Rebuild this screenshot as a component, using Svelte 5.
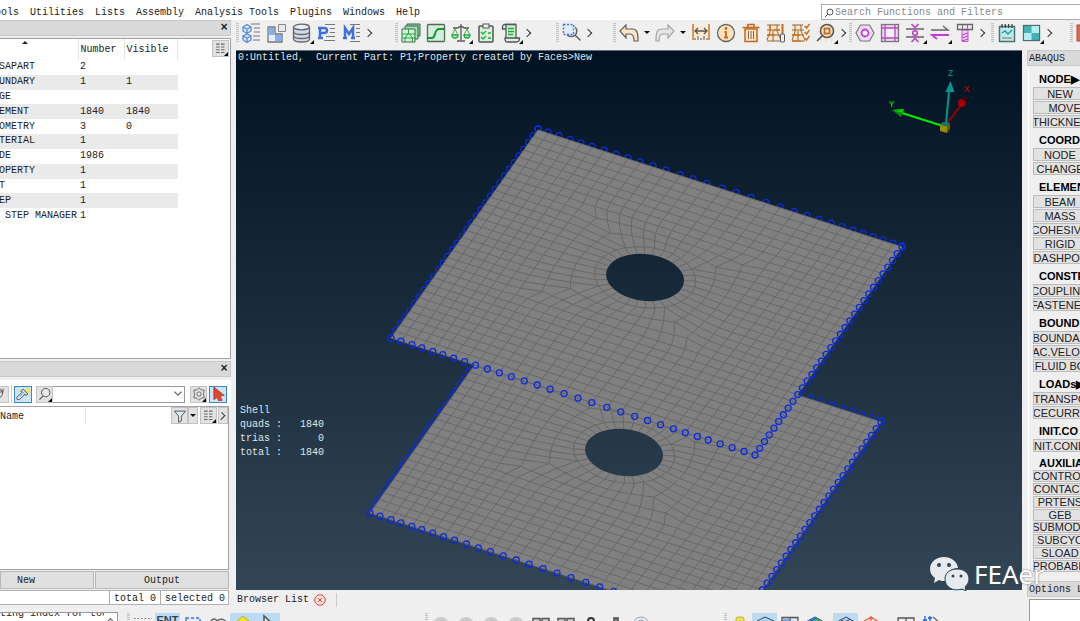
<script lang="ts">
  type Tool = { icon: string; label: string; corner?: boolean; small?: boolean; on?: boolean };

  const menus = ['ools', 'Utilities', 'Lists', 'Assembly', 'Analysis Tools', 'Plugins', 'Windows', 'Help'];

  const icons: Record<string, string> = {
    model: '<path d="M1 4l4-2.500 4 2.500v4l-4 2.500-4-2.500zM1 4l4 2 4-2M5 6v4.500M1 13v4l4 2.500 4-2.500v-4l-4-2-4 2 4 2 4-2M5 15v4.500" fill="#dbe8ff" stroke="#5b8ad8" stroke-width="1.300"/><path d="M9 1h9M12 5h6M12 9h6M11 13h7M11 17h7" stroke="#777"/>',
    part: '<path d="M1 4h7v7h7v8H1z" fill="#e3ecf8" stroke="#777" stroke-width="1.300"/><path d="M2 5h5v7H2zM8 12h6v6H8z" fill="#7fb0f5"/><path d="M11.500 1.500h7v7h-7z" fill="#e6e9ee" stroke="#888"/>',
    database: '<path d="M1.500 4v12c0 4 16 4 16 0V4" fill="#cfd9ea" stroke="#666" stroke-width="1.300"/><ellipse cx="9.500" cy="4" rx="8" ry="2.800" fill="#e8eef7" stroke="#666" stroke-width="1.300"/><path d="M1.500 8.500c0 4 16 4 16 0M1.500 12.500c0 4 16 4 16 0" fill="none" stroke="#666" stroke-width="1.300"/>',
    property: '<path d="M3 16V5h4c4 0 4 5 0 5H4M1 15h5M1 5h3" fill="none" stroke="#3f6fdc" stroke-width="2.500"/><path d="M8 1.500h10M13 5.500h5M13 9.500h5M9 13.500h9M7 17.500h11" stroke="#777"/>',
    material: '<path d="M3 16V5l4 6 4-6v11M1 15h4M9 15h4" fill="none" stroke="#3f6fdc" stroke-width="2.500"/><path d="M8 1.500h10M14 5.500h4M14 9.500h4M14 13.500h4M8 18.500h10" stroke="#777"/>',
    layers: '<path d="M6 1h13v12H6z" fill="#8cc9a0" stroke="#3d6b4c"/><path d="M4 3h13v13H4z" fill="#a9dcb5" stroke="#3d6b4c"/><path d="M1 6h13v13H1z" fill="#d7f3dc" stroke="#3d6b4c"/><path d="M7.500 6v4L4 15v4M7.500 10l4 5v4M1 11h13M1 15h13" fill="none" stroke="#23a33f"/>',
    curve: '<rect x="1.500" y="1.500" width="17" height="17" rx="1" fill="#d3eeda" stroke="#4d6c56" stroke-width="1.300"/><path d="M2 15h4c4 0 2-9 7-9h5" fill="none" stroke="#139a35" stroke-width="2"/>',
    scales: '<path d="M10 1v16M6 18h8M2 5h5c1-2 5-2 6 0h5" fill="none" stroke="#555" stroke-width="1.300"/><path d="M4 6l-3 6M4 6l3 6M16 6l-3 6M16 6l3 6" stroke="#44a95c"/><path d="M1 12a3 3 0 006 0zM13 12a3 3 0 006 0z" fill="#c9f2d0" stroke="#1fae3e" stroke-width="1.300"/>',
    checklist: '<rect x="3" y="3" width="14" height="16" rx="1" fill="#d8f0dc" stroke="#555" stroke-width="1.500"/><rect x="7" y="1" width="6" height="4" fill="#eee" stroke="#555"/><path d="M5 9l2 2 3-3M5 14l2 2 3-3M12 10h3M12 15h3" fill="none" stroke="#1fae3e" stroke-width="1.300"/>',
    script: '<path d="M5 6H1.500V4c0-3 3-2.500 3-2.500H15" fill="#d8f0dc" stroke="#555" stroke-width="1.300"/><path d="M5 15V4c0-2-1-2.500-1-2.500h11V15" fill="#cdeed3" stroke="#555" stroke-width="1.300"/><path d="M4 15h14.500c0 3-1 4-3 4H6c-2 0-2-2-2-4z" fill="#d8f0dc" stroke="#555" stroke-width="1.300"/><path d="M7 5.500h6M7 8.500h6M7 11.500h5" stroke="#1fae3e" stroke-width="1.300"/>',
    zoomArea: '<path d="M1.500 1.500h10v10h-10z" fill="#e3ecfb" stroke="#3477ef" stroke-dasharray="2 1.500" stroke-width="1.400"/><path d="M13 4a5.500 5.500 0 11-8 7.500M13.500 12.500l5 5" fill="none" stroke="#666" stroke-width="1.500"/>',
    undo: '<path d="M7 2v4h6c5 0 6 3 6 12h-4c0-5-1-7-4-7H7v4L1 8z" fill="#fbe6c6" stroke="#655f57" stroke-width="1.200"/>',
    redo: '<path d="M13 2v4H7c-5 0-6 3-6 12h3c0-5 1-7 4-7h5v4l6-7z" fill="#e5e5e5" stroke="#a5a5a5" stroke-width="1.200"/>',
    measure: '<path d="M2 3h16v12H2z" fill="#fbead2"/><path d="M2 1v16M18 1v16" stroke="#cf7a2b" stroke-width="1.500"/><path d="M4 8h12M7 5L4 8l3 3M13 5l3 3-3 3" fill="none" stroke="#555" stroke-width="1.300"/><path d="M4 17v-2M7 17v-4M10 17v-2M13 17v-4M16 17v-2" stroke="#555"/>',
    info: '<circle cx="10" cy="10" r="8.500" fill="#fbe2bd" stroke="#66615a" stroke-width="1.300"/><circle cx="10" cy="5.500" r="1.400" fill="#c8681c"/><path d="M8.500 9H10v5.500M8 14.500h4" fill="none" stroke="#c8681c" stroke-width="1.800"/>',
    trash: '<path d="M4 6h12v12.500H4z" fill="#fbe6c6" stroke="#c8681c" stroke-width="1.500"/><path d="M1.500 4.500h17M7 4V1.500h6V4" fill="none" stroke="#c8681c" stroke-width="1.600"/><path d="M7.500 8v8M10 8v8M12.500 8v8" stroke="#77655a"/>',
    meshEdit: '<path d="M1 2h13v16H1z" fill="#fbe6c6"/><path d="M1 2h13M1 7h13M1 12h13M1 18h13M4 2v7l-3 8M11 2v6l4 9M7 8v10" fill="none" stroke="#8a6847"/><path d="M1 12h8M8 7h6M4 2v6" stroke="#d17622" stroke-width="1.500"/><path d="M16.500 1v10" stroke="#c8681c" stroke-width="2"/><rect x="14.500" y="11" width="4" height="8" rx="1" fill="#eee" stroke="#555"/>',
    meshCheck: '<path d="M1 2h11v16H1z" fill="#fbe6c6"/><path d="M1 2h11M1 7h12M1 12h12M1 18h13M4 2v7l-3 8M10 2v6l4 9M7 8v10" fill="none" stroke="#8a6847"/><path d="M1 12h8M1 18h9" stroke="#d17622" stroke-width="1.500"/><path d="M13.500 3l2 2 3-4M13.500 9l2 2 3-4M13.500 15l2 2 3-4" fill="none" stroke="#d06a1c" stroke-width="1.500"/>',
    find: '<path d="M10 0v19M1 9h18M1 5h18M5 1v18M15 1v18" stroke="#f3d8b4"/><circle cx="11" cy="8" r="6.500" fill="#fbe0ba" stroke="#555" stroke-width="1.500"/><rect x="8.500" y="5.500" width="5" height="5" fill="#fff1dc" stroke="#c8681c" stroke-width="1.800"/><path d="M6 13l-5 5" stroke="#555" stroke-width="1.700"/>',
    hexagon: '<path d="M5.500 2h9l4.500 8-4.500 8h-9L1 10z" fill="#f2dcf5" stroke="#777" stroke-width="1.200"/><circle cx="10" cy="10" r="3.500" fill="#fff" stroke="#c63bd6" stroke-width="1.800"/>',
    frame: '<rect x="1.500" y="1.500" width="17" height="17" fill="#f0d4f4" stroke="#777" stroke-width="1.300"/><rect x="5" y="5" width="10" height="10" fill="#f3eef4"/><path d="M5 2v16M15 2v16M2 5h16M2 15h16" stroke="#b34cc0" stroke-width="1.300"/>',
    joint: '<path d="M1 6h18M1 14h18" stroke="#666" stroke-width="1.500"/><circle cx="10" cy="10" r="2.300" fill="#fff" stroke="#c63bd6" stroke-width="1.600"/><path d="M6.500 1L10 4.500 13.500 1M6.500 19l3.500-3.500 3.500 3.500" fill="none" stroke="#c63bd6" stroke-width="1.600"/>',
    swap: '<path d="M1 7h17l-5-4" fill="none" stroke="#666" stroke-width="1.500"/><path d="M19 12H2l5 4" fill="none" stroke="#c63bd6" stroke-width="1.800"/>',
    bolt: '<path d="M7 7h6v11.500H7z" fill="#f0d4f4" stroke="#b661c0"/><path d="M2.500 1.500h15v5h-15z" fill="#f2e4f4" stroke="#666" stroke-width="1.300"/><path d="M7.500 2v4M12.500 2v4" stroke="#777"/><path d="M7 12l6-2M7 15l6-2M7 18l6-2" stroke="#c63bd6" stroke-width="1.300"/>',
    report: '<rect x="2.500" y="3.500" width="15" height="15" fill="#c3eaea" stroke="#4d7272" stroke-width="1.500"/><path d="M5 1v4M8.300 1v4M11.600 1v4M15 1v4" stroke="#444" stroke-width="1.300"/><path d="M5 10l3-2 3 3 4-4" fill="none" stroke="#14a0a0" stroke-width="1.500"/><path d="M5 15h10" stroke="#777"/>',
    checker: '<rect x="1.500" y="2.500" width="16" height="15" fill="#3fb4b8" stroke="#567" stroke-width="1.300"/><path d="M9.500 3H17v7H9.500zM2 10h7.500v7H2z" fill="#b6ecec"/>',
    red: '<rect x="1" y="2" width="16" height="16" fill="#e2654b" stroke="#b54a33"/>',
    columns: '<path d="M3 3h5M3 7h5M3 11h5M3 15h5M10 3h5M10 7h5M10 11h5M10 15h5" stroke="#666" stroke-width="1.500"/>',
    refresh: '<path d="M1 4c6-4 12 1 11 6s-6 7-11 4M13 2v5H8" fill="none" stroke="#666" stroke-width="1.500"/>',
    torch: '<path d="M13 1c5-1 7 4 6 9l-5-5z" fill="#ffe52e"/><path d="M2 18l-1-3 7-7-1-2 3-3 7 7-3 2-2-1-7 7z" fill="#d9e4ee" stroke="#4a5a68" stroke-width="1.400"/><path d="M8 6l6 6M6 13l3-3" stroke="#4a5a68"/>',
    search: '<circle cx="11" cy="8" r="6" fill="#e9e9e9" stroke="#555" stroke-width="1.400"/><path d="M7 13l-5 5" stroke="#555" stroke-width="1.600"/>',
    gear: '<path d="M10 1l3 3 4.500 0.500-1 5.500 1 5.500-4.500 0.500-3 3-3-3-4.500-0.500 1-5.500-1-5.500 4.500-0.500z" fill="#ddd" stroke="#666" stroke-width="1.300"/><circle cx="10" cy="10" r="3" fill="#eee" stroke="#666" stroke-width="1.300"/>',
    pointer: '<path d="M4 0l15 12-6 1 3 6-5 1-2-5-5 3z" fill="#e2452e" stroke="#a23222"/>',
    funnel: '<path d="M2 3h16l-6 7v7l-4 2v-9z" fill="#dceafa" stroke="#555" stroke-width="1.400"/>',
    dots: '<path d="M1 5.500h18M1 9.500h18" stroke="#777" stroke-dasharray="1.500 2"/>',
    marquee: '<path d="M3 5h14v10H3z" fill="#e3ecfb" stroke="#3477ef" stroke-width="1.500" stroke-dasharray="3 2"/>',
    lasso: '<path d="M4 12c-3-4 2-9 5-4 3-3 7-2 9 1" fill="none" stroke="#666" stroke-width="1.500"/>',
    bulb: '<path d="M4 8l6-5 6 5-6 4z" fill="#f6e02a" stroke="#c1ac20"/>',
    cursor: '<path d="M6 3v12l4-4h5z" fill="#cfe6f7" stroke="#555" stroke-width="1.500"/>',
    disc: '<circle cx="10" cy="12" r="8" fill="#cbcbcb"/><path d="M10 7v4" stroke="#aaa"/>',
    pair: '<path d="M2 5.500h7v9H2zM11 5.500h7v9h-7z" fill="#ccc" stroke="#555" stroke-width="1.500"/>',
    lock: '<path d="M7 12V8c0-4 6-4 6 0v4" fill="none" stroke="#333" stroke-width="2"/>',
    pin: '<path d="M8 5h4v10H8z" fill="#888" stroke="#444" stroke-width="1.500"/>',
    rings: '<circle cx="10" cy="12" r="8" fill="#eee" stroke="#9aa4ad"/><circle cx="10" cy="12" r="5" fill="none" stroke="#9aa4ad"/>',
    cylinder: '<rect x="6" y="4" width="8" height="14" rx="2" fill="#f0df65" stroke="#c4b130"/>',
    cube: '<path d="M2 8l8-4 9 4v9H2zM2 8l8 4 9-4" fill="#a9d4f3" stroke="#445"/>',
    panes: '<path d="M2 4.500h16v13H2zM10 4.500v13M10 10h8" fill="#dde5f2" stroke="#555" stroke-width="1.300"/><path d="M3 6h6v9H3z" fill="#7aa6ef"/>',
    contour: '<path d="M1 9l9-5 9 5-9 6z" fill="#35b668" stroke="#445"/><path d="M1 9l9-5 2 1-9 6z" fill="#2b70df"/><path d="M13 11l6-2-9 6z" fill="#eedc3b"/>',
    meshCube: '<path d="M1 9l9-5 9 5-9 6zM5 7l9 5M14 6l-9 6" fill="#a9cde8" stroke="#445"/>',
    redCube: '<path d="M2 9l8-5 8 5-8 5zM10 3v11" fill="#fbe5e0" stroke="#e2654b" stroke-width="1.300"/>',
    grid: '<path d="M2 5h16v13H2zM10 5v13M2 11h16" fill="#eee" stroke="#555" stroke-width="1.300"/>',
    sliders: '<path d="M4 3v12M9 3v12" stroke="#3477ef" stroke-width="1.500"/><path d="M2 7h4M7 5h4" stroke="#3477ef" stroke-width="2"/><path d="M12 4l6 5-5 5" fill="none" stroke="#666" stroke-width="1.300"/>'
  };

  const toolGroups: { tools: Tool[]; more: boolean }[] = [
    {
      more: true,
      tools: [
        { icon: 'model', label: 'Model' },
        { icon: 'part', label: 'Part' },
        { icon: 'database', label: 'Database', corner: true },
        { icon: 'property', label: 'Property' },
        { icon: 'material', label: 'Material' }
      ]
    },
    {
      more: true,
      tools: [
        { icon: 'layers', label: 'Layers' },
        { icon: 'curve', label: 'Curve' },
        { icon: 'scales', label: 'Compare', corner: true },
        { icon: 'checklist', label: 'Checklist' },
        { icon: 'script', label: 'Script', corner: true }
      ]
    },
    { more: true, tools: [{ icon: 'zoomArea', label: 'Zoom area' }] },
    {
      more: true,
      tools: [
        { icon: 'undo', label: 'Undo' },
        { icon: 'caret', label: 'Undo history', small: true },
        { icon: 'redo', label: 'Redo' },
        { icon: 'caret', label: 'Redo history', small: true },
        { icon: 'measure', label: 'Measure' },
        { icon: 'info', label: 'Card info' },
        { icon: 'trash', label: 'Delete' },
        { icon: 'meshEdit', label: 'Edit mesh' },
        { icon: 'meshCheck', label: 'Check mesh' },
        { icon: 'find', label: 'Find', corner: true }
      ]
    },
    {
      more: true,
      tools: [
        { icon: 'hexagon', label: 'Node' },
        { icon: 'frame', label: 'Frame' },
        { icon: 'joint', label: 'Joint', corner: true },
        { icon: 'swap', label: 'Swap', corner: true },
        { icon: 'bolt', label: 'Bolt' }
      ]
    },
    {
      more: true,
      tools: [
        { icon: 'report', label: 'Report' },
        { icon: 'checker', label: 'Matrix', corner: true }
      ]
    },
    { more: false, tools: [{ icon: 'red', label: 'Optimize' }] }
  ];

  const lowerGroups: Tool[][] = [
    [
      { icon: 'dots', label: 'Points' },
      { icon: 'entity', label: 'Entity', on: true },
      { icon: 'marquee', label: 'Window select' },
      { icon: 'lasso', label: 'Lasso' },
      { icon: 'bulb', label: 'Highlight', on: true },
      { icon: 'cursor', label: 'Cursor', on: true }
    ],
    [
      { icon: 'disc', label: 'Previous' },
      { icon: 'disc', label: 'Reverse' },
      { icon: 'disc', label: 'Stop' },
      { icon: 'disc', label: 'Next' },
      { icon: 'pair', label: 'Mask' },
      { icon: 'pair', label: 'Unmask' },
      { icon: 'lock', label: 'Lock' },
      { icon: 'pin', label: 'Pin' },
      { icon: 'rings', label: 'Sphere clip' }
    ],
    [
      { icon: 'cylinder', label: 'Geometry' },
      { icon: 'cube', label: 'Shaded', on: true },
      { icon: 'panes', label: 'Panes' },
      { icon: 'contour', label: 'Contour' }
    ],
    [
      { icon: 'meshCube', label: 'Mesh lines', on: true },
      { icon: 'redCube', label: 'Transparency' }
    ],
    [
      { icon: 'grid', label: 'Grid' },
      { icon: 'sliders', label: 'Visual options' }
    ]
  ];

  const entities = [
    { name: 'SAPART', number: '2', visible: '' },
    { name: 'UNDARY', number: '1', visible: '1' },
    { name: 'GE', number: '', visible: '' },
    { name: 'EMENT', number: '1840', visible: '1840' },
    { name: 'OMETRY', number: '3', visible: '0' },
    { name: 'TERIAL', number: '1', visible: '' },
    { name: 'DE', number: '1986', visible: '' },
    { name: 'OPERTY', number: '1', visible: '' },
    { name: 'T', number: '1', visible: '' },
    { name: 'EP', number: '1', visible: '' },
    { name: ' STEP MANAGER', number: '1', visible: '' }
  ];

  const sections = [
    { title: 'NODE▶', items: ['NEW', '\u00a0\u00a0\u00a0MOVE', 'THICKNES'] },
    { title: 'COORD', items: ['NODE', 'CHANGE'] },
    { title: 'ELEMENT', items: ['BEAM', 'MASS', 'COHESIVE', 'RIGID', 'DASHPOT'] },
    { title: 'CONSTR', items: ['COUPLING', 'FASTENER'] },
    { title: 'BOUND', items: ['BOUNDAR', 'AC.VELOC', 'FLUID BO'] },
    { title: 'LOADs▶', items: ['TRANSPO', 'CECURRE'] },
    { title: 'INIT.CO', items: ['NIT.COND'] },
    {
      title: 'AUXILIA',
      dense: true,
      items: ['CONTROL', 'CONTACT', 'PRTENS', 'GEB', 'SUBMODE', 'SUBCYC', 'SLOAD', 'PROBABIL']
    }
  ];

  const counts = [
    ['quads :', '1840'],
    ['trias :', '0'],
    ['total :', '1840']
  ];

  // ---- plate mesh ----
  const rows = 31;
  const cols = 30;
  const center = { u: 0.473, v: 0.443 };
  const holeRadius = 0.0993;
  const ringRadius = 0.129;
  const half = 4;
  const mid = 14;
  const reach = 1.9;

  const topSteps = [
    10, 11, 11, 11, 11, 12, 12, 12, 12, 13, 13, 14, 13, 14, 15, 14, 15, 15, 14, 14,
    13, 12, 12, 11, 11, 10, 10, 10, 10, 9
  ];
  const bottomSteps = [
    10, 11, 10, 11, 10, 11, 11, 11, 12, 12, 12, 13, 13, 13, 14, 14, 14, 15, 14, 14,
    13, 13, 13, 12, 12, 11, 12, 12, 12, 11
  ];

  function accumulate(steps: number[]) {
    const total = steps.reduce((a, b) => a + b, 0);
    let sum = 0;
    return [0, ...steps.map((s) => (sum += s) / total)];
  }

  const top = accumulate(topSteps);
  const bottom = accumulate(bottomSteps);

  function toScreen(u: number, v: number) {
    return [538 + 364 * u - 147 * v, 129 + 117 * u + 208 * v];
  }

  // angle of a point on the square spread evenly round the circle
  function squareAngle(a: number, b: number) {
    const q = Math.PI / 4;
    if (Math.abs(a) >= Math.abs(b)) return a > 0 ? (q * b) / a : Math.PI + (q * b) / a;
    return b > 0 ? 2 * q - (q * a) / b : -2 * q - (q * a) / b;
  }

  function node(i: number, j: number) {
    const v = j / rows;
    const u = top[i] * (1 - v) + bottom[i] * v;
    const a = (i - mid) / half;
    const b = (j - mid) / half;
    const rho = Math.max(Math.abs(a), Math.abs(b));
    if (rho >= reach || rho === 0) return toScreen(u, v);
    const w = Math.pow((reach - Math.max(rho, 1)) / (reach - 1), 1.6);
    const angle = squareAngle(a, b);
    const r = ringRadius * rho;
    return toScreen(
      u * (1 - w) + (center.u + r * Math.cos(angle)) * w,
      v * (1 - w) + (center.v + r * Math.sin(angle)) * w
    );
  }

  function inside(i: number, j: number) {
    return Math.abs(i - mid) < half && Math.abs(j - mid) < half;
  }

  function fmt(p: number[]) {
    return `${p[0].toFixed(1)} ${p[1].toFixed(1)}`;
  }

  function meshPath() {
    let d = '';
    for (let i = 0; i <= cols; i++) {
      for (let j = 0; j <= rows; j++) {
        if (inside(i, j)) continue;
        if (i < cols && !inside(i + 1, j)) d += `M${fmt(node(i, j))}L${fmt(node(i + 1, j))}`;
        if (j < rows && !inside(i, j + 1)) d += `M${fmt(node(i, j))}L${fmt(node(i, j + 1))}`;
      }
    }
    for (let k = 0; k < 32; k++) {
      const t = (k * Math.PI) / 16;
      const c = Math.cos(t);
      const s = Math.sin(t);
      d += `M${fmt(toScreen(center.u + holeRadius * c, center.v + holeRadius * s))}`;
      d += `L${fmt(toScreen(center.u + ringRadius * c, center.v + ringRadius * s))}`;
    }
    return d;
  }

  function facePath() {
    let d = 'M538 129L902 246L755 454L391 337Z';
    for (let k = 0; k < 48; k++) {
      const t = (k * Math.PI) / 24;
      const p = toScreen(center.u + holeRadius * Math.cos(t), center.v + holeRadius * Math.sin(t));
      d += (k ? 'L' : 'M') + fmt(p);
    }
    return d + 'Z';
  }

  const mesh = meshPath();
  const face = facePath();
  // far edges are half covered by the plate, near edges lie over it
  const backNodes = [
    ...top.map((u) => toScreen(u, 0)),
    ...Array.from({ length: rows }, (_, j) => toScreen(0, j / rows))
  ];
  const frontNodes = [
    ...bottom.map((u) => toScreen(u, 1)),
    ...Array.from({ length: rows }, (_, j) => toScreen(1, j / rows))
  ];

  let query = $state('');
  let filter = $state('');
</script>

{#snippet icon(name: string)}
  <svg class="icon" viewBox="0 0 20 20" fill="none" aria-hidden="true">{@html icons[name]}</svg>
{/snippet}

{#snippet plate()}
  {#each backNodes as [x, y]}
    <circle class="constraint" cx={x} cy={y - 1} r="3" />
  {/each}
  <path d={face} fill="#808080" fill-rule="evenodd" />
  <path d={mesh} class="mesh" />
  {#each frontNodes as [x, y]}
    <circle class="constraint" cx={x} cy={y} r="3" />
  {/each}
{/snippet}

<div class="app">
  <header class="menubar">
    <nav>
      {#each menus as menu}
        <button class="menu">{menu}</button>
      {/each}
    </nav>
    <label class="global-search">
      <svg viewBox="0 0 10 10" aria-hidden="true"><circle cx="6" cy="4" r="3" /><path d="M4 6L1 9" /></svg>
      <input type="text" aria-label="Search" placeholder="Search Functions and Filters" bind:value={query} />
    </label>
  </header>

  <aside class="browser">
    <div class="dock-title"><button aria-label="Close browser">×</button></div>
    <div class="entity-box">
      <table class="entities">
        <thead>
          <tr>
            <th class="name"><span class="sort"></span></th>
            <th class="number">Number</th>
            <th>Visible</th>
          </tr>
        </thead>
        <tbody>
          {#each entities as row}
            <tr>
              <td class="name">{row.name}</td>
              <td>{row.number}</td>
              <td>{row.visible}</td>
            </tr>
          {/each}
        </tbody>
      </table>
      <button class="flat corner" aria-label="Columns">{@render icon('columns')}</button>
    </div>

    <div class="dock-title second"><button aria-label="Close list">×</button></div>
    <div class="filter-row">
      <button class="flat cut" aria-label="Refresh">{@render icon('refresh')}</button>
      <span class="bar"></span>
      <button class="flat on" aria-label="Highlight">{@render icon('torch')}</button>
      <div class="combo">
        <button class="flat corner" aria-label="Search options">{@render icon('search')}</button>
        <input type="text" aria-label="Filter" bind:value={filter} />
        <svg viewBox="0 0 10 10" aria-hidden="true"><path d="M2 3l3 3 3-3" /></svg>
      </div>
      <button class="flat corner" aria-label="Settings">{@render icon('gear')}</button>
      <button class="flat on" aria-label="Pick">{@render icon('pointer')}</button>
    </div>
    <div class="list-box">
      <span class="list-name">Name</span>
      <div class="list-tools">
        <button class="flat" aria-label="Filter list">{@render icon('funnel')}</button>
        <button class="flat slim" aria-label="Filter menu"><span class="caret"></span></button>
        <button class="flat corner" aria-label="List columns">{@render icon('columns')}</button>
        <button class="flat slim" aria-label="More"><span class="chevron"></span></button>
      </div>
    </div>
    <div class="actions">
      <button>New</button>
      <button>Output</button>
    </div>
    <div class="status">
      <span>total 0</span>
      <span>selected 0</span>
    </div>
  </aside>

  <div class="toolbar" role="toolbar">
    {#each toolGroups as group}
      <div class="group">
        <span class="grip"></span>
        {#each group.tools as tool}
          <button class="tool" class:corner={tool.corner} class:small={tool.small} aria-label={tool.label}>
            {#if tool.small}
              <span class="caret"></span>
            {:else}
              {@render icon(tool.icon)}
            {/if}
          </button>
        {/each}
        {#if group.more}
          <button class="tool small" aria-label="More tools"><span class="chevron"></span></button>
        {/if}
      </div>
    {/each}
  </div>

  <main class="viewport">
    <svg class="scene" viewBox="236 50 786 540" preserveAspectRatio="xMinYMin slice" aria-hidden="true">
      <g transform="translate(-21 175)">{@render plate()}</g>
      {@render plate()}

      <g class="triad">
        <path d="M945 125L962 103" stroke="#900" stroke-width="2" />
        <circle cx="962" cy="102" r="4" fill="#a00" />
        <path d="M962 98l5-2-1 6z" fill="#500" />
        <path d="M943 125L902 112" stroke="#0e0" stroke-width="2" />
        <path d="M892 109l12-1-3 8z" fill="#0a8a0a" />
        <path d="M892 109l12-1-1 4z" fill="#0c0" />
        <path d="M946 123L949 90" stroke="#098" stroke-width="2" />
        <path d="M950.500 80l-5 11h9z" fill="#0a9490" />
        <path d="M940 124l7 1v7l-7-2z" fill="#998a00" />
        <path d="M940 124l3-3 7 1-3 3z" fill="#177" />
        <path d="M947 125l3-3v6l-3 4z" fill="#665c00" />
        <text x="889" y="106" fill="#0e0">Y</text>
        <text x="948" y="75" fill="#099">Z</text>
        <text x="964" y="91" fill="#d00">X</text>
      </g>
    </svg>
    <p class="model-title">0:Untitled,&nbsp; Current Part: P1;Property created by Faces&gt;New</p>
    <table class="counts">
      <caption>Shell</caption>
      <tbody>
        {#each counts as [label, value]}
          <tr><th>{label}</th><td>{value}</td></tr>
        {/each}
      </tbody>
    </table>
  </main>

  <div class="tabs">
    <span>Browser List</span>
    <button aria-label="Close tab">
      <svg viewBox="0 0 12 12"><circle cx="6" cy="6" r="5.300" /><path d="M4 4l4 4M8 4l-4 4" /></svg>
    </button>
    <span class="bar"></span>
  </div>

  <aside class="solver">
    <h2>ABAQUS</h2>
    <div class="solver-body">
      {#each sections as section}
        <section class:dense={section.dense}>
          <h3>{section.title}</h3>
          <div class="items">
            {#each section.items as item}
              <button>{item}</button>
            {/each}
          </div>
        </section>
      {/each}
    </div>
    <h2>Options L</h2>
    <div class="options-box"></div>
  </aside>

  <footer class="lower">
    <div class="hint"><span>ting index for tool</span><i></i></div>
    {#each lowerGroups as group, g}
      <div class="group">
        {#if g < 3}<span class="grip"></span>{/if}
        {#each group as tool}
          <button class="tool" class:on={tool.on} aria-label={tool.label}>
            {#if tool.icon === 'entity'}ENT{:else}{@render icon(tool.icon)}{/if}
          </button>
        {/each}
      </div>
    {/each}
  </footer>

  <div class="watermark">
    <svg viewBox="0 0 40 34" aria-hidden="true">
      <path d="M14 0C6 0 0 5 0 12c0 4 2 7 5 9l-1 5 5-3c2 1 4 1 6 1 0-8 6-13 13-13C27 4 21 0 14 0z" fill="#e6eaec" />
      <path d="M27 12c7 0 12 4 12 10 0 3-2 6-4 8l1 4-4-2c-9 3-17-2-17-10 0-6 5-10 12-10z" fill="#e6eaec" stroke="#314352" />
      <g fill="#314352"><circle cx="9" cy="8" r="2" /><circle cx="19" cy="8" r="2" /><circle cx="23" cy="19" r="1.500" /><circle cx="31" cy="19" r="1.500" /></g>
    </svg>
    <span>FEAer</span>
  </div>
</div>

<style>
  :global(body) {
    margin: 0;
    overflow: hidden;
  }

  .app {
    position: relative;
    display: grid;
    grid-template-columns: 236px minmax(0, 1fr) 58px;
    grid-template-rows: 20px 30px minmax(0, 1fr) 19px 12px;
    grid-template-areas:
      'menu menu menu'
      'left tools tools'
      'left view solver'
      'left tabs solver'
      'lower lower solver';
    height: 100vh;
    background: #efefef;
    color: #222;
    font: 10px/14px 'Liberation Mono', monospace;
    overflow: hidden;
  }

  button,
  input {
    padding: 0;
    border: 0;
    background: none;
    color: inherit;
    font: inherit;
  }

  .icon {
    display: block;
    width: 20px;
    height: 20px;
  }

  /* menu bar */
  .menubar {
    grid-area: menu;
    display: flex;
    justify-content: space-between;
    background: #fff;
  }

  nav {
    display: flex;
    gap: 11px;
    margin-left: -5px;
    padding-top: 5px;
  }

  .menu {
    white-space: nowrap;
  }

  .global-search {
    display: flex;
    align-items: center;
    gap: 1px;
    box-sizing: border-box;
    width: 259px;
    height: 16px;
    margin-top: 4px;
    padding: 2px 0 0 2px;
    border: 1px solid #aaa;
    border-right: 0;
  }

  .global-search svg {
    width: 10px;
    height: 10px;
    fill: none;
    stroke: #555;
  }

  .global-search input {
    flex: 1;
    min-width: 0;
    outline: 0;
  }

  .global-search input::placeholder {
    color: #888;
    opacity: 1;
  }

  /* left browser */
  .browser {
    grid-area: left;
    display: flex;
    flex-direction: column;
    min-width: 0;
    padding-right: 5px;
    padding-bottom: 4px;
  }

  .dock-title {
    display: flex;
    justify-content: flex-end;
    align-items: center;
    box-sizing: border-box;
    height: 16px;
    border: 1px solid #c8c8c8;
    border-left: 0;
    background: #d9d9d9;
  }

  .dock-title.second {
    margin-top: 2px;
  }

  .dock-title button {
    width: 12px;
    font-size: 12px;
    font-weight: bold;
  }

  .entity-box {
    display: flex;
    justify-content: space-between;
    align-items: flex-start;
    box-sizing: border-box;
    height: 321px;
    margin-top: 2px;
    padding-right: 1px;
    border: 1px solid #a0a0a8;
    border-left: 0;
    background: #fff;
  }

  .entities {
    width: 178px;
    height: 184px;
    table-layout: fixed;
    border-collapse: collapse;
  }

  .entities th {
    height: 21px;
    box-sizing: border-box;
    padding: 0 0 0 2px;
    border-right: 1px solid #e4e4e4;
    font-weight: normal;
    text-align: left;
  }

  .entities th.name {
    width: 78px;
    vertical-align: top;
  }

  .entities th.number {
    width: 46px;
  }

  .entities td {
    padding: 0 0 0 2px;
    line-height: 14px;
    white-space: pre;
  }

  .entities td.name {
    padding: 0;
    text-indent: -1px;
  }

  .entities tbody tr:nth-child(even) {
    background: #eaeaea;
  }

  .sort {
    display: block;
    width: 0;
    margin: 2px 0 0 20px;
    border: 3px solid transparent;
    border-top: 0;
    border-bottom-color: #222;
  }

  .flat {
    position: relative;
    display: flex;
    align-items: center;
    justify-content: center;
    box-sizing: border-box;
    flex: none;
    width: 17px;
    height: 17px;
    border: 1px solid #c2c2c2;
    background: #e2e2e2;
  }

  .flat .icon {
    flex: none;
    width: 14px;
    height: 14px;
  }

  .flat.on {
    width: 18px;
    border-color: #3d87c0;
    background: #cbe4f6;
  }

  .flat.slim {
    width: 10px;
  }

  .flat.cut {
    width: 9px;
    border-left: 0;
    overflow: hidden;
    justify-content: flex-end;
  }

  .entity-box .flat {
    margin-top: 1px;
  }

  .corner::after {
    content: '';
    position: absolute;
    right: 0;
    bottom: 0;
    border: 2px solid #000;
    border-top-color: transparent;
    border-left-color: transparent;
  }

  .bar {
    width: 1px;
    height: 18px;
    background: #ccc;
  }

  .filter-row {
    display: flex;
    align-items: center;
    gap: 2px;
    height: 24px;
    margin-top: 3px;
    padding: 2px 4px 0 0;
    background: #fff;
  }

  .combo {
    display: flex;
    align-items: center;
    flex: 1;
    min-width: 0;
    margin: 0 3px 0 2px;
    border: 1px solid #999;
    border-left: 0;
    height: 15px;
  }

  .combo input {
    flex: 1;
    min-width: 0;
    outline: 0;
  }

  .combo svg {
    flex: none;
    width: 12px;
    height: 12px;
    fill: none;
    stroke: #666;
  }

  .combo .flat svg {
    width: 14px;
    height: 14px;
  }

  .list-box {
    display: flex;
    justify-content: space-between;
    flex: 1;
    margin-right: 2px;
    border: 1px solid #a0a0a8;
    border-left: 0;
    background: #fff;
  }

  .list-name {
    width: 85px;
    height: 18px;
    border-right: 1px solid #e4e4e4;
    line-height: 20px;
  }

  .list-tools {
    display: flex;
  }

  .list-tools .flat.corner {
    margin: 0 1px 0 2px;
  }

  .actions {
    display: grid;
    grid-template-columns: 94px 1fr;
    gap: 1px;
    margin: 1px 2px 1px 0;
  }

  .actions button {
    height: 18px;
    padding-top: 2px;
    border: 1px solid #b8b8b8;
    background: #e0e0e0;
  }

  .actions button:first-child {
    padding-right: 42px;
  }

  .status {
    display: flex;
    justify-content: flex-end;
    box-sizing: border-box;
    height: 15px;
    margin-right: 2px;
    border: 1px solid #b0b0b0;
    border-left: 0;
    background: #fff;
  }

  .status span {
    padding: 1px 4px 0;
    border-left: 1px solid #aaa;
  }

  .status span:last-child {
    padding-right: 3px;
  }

  /* toolbars */
  .toolbar {
    grid-area: tools;
    display: grid;
    grid-template-columns: 159px 161px 57px 236px 142px 79px 1fr;
    align-items: center;
    box-sizing: border-box;
    height: 28px;
    padding-bottom: 3px;
    overflow: hidden;
  }

  .group {
    display: flex;
    align-items: center;
  }

  .grip {
    flex: none;
    width: 3px;
    height: 20px;
    background: repeating-linear-gradient(#c4c4c4 0 1px, #e8e8e8 1px 2px);
  }

  .tool {
    position: relative;
    display: flex;
    align-items: center;
    justify-content: center;
    flex: none;
    width: 25px;
    height: 22px;
  }

  .tool.small {
    width: 11px;
  }

  .caret {
    border: 3px solid transparent;
    border-top-color: #111;
    border-bottom: 0;
  }

  .chevron {
    box-sizing: border-box;
    width: 6px;
    height: 6px;
    border: solid #333;
    border-width: 1px 1px 0 0;
    transform: rotate(45deg);
  }

  .tool .chevron {
    margin-right: 4px;
  }

  .flat .chevron {
    margin-right: 3px;
  }

  /* viewport */
  .viewport {
    grid-area: view;
    position: relative;
    border-top: 1px solid #5a6f80;
    box-sizing: border-box;
    background: linear-gradient(#011322, #334655);
    color: #dfe4e8;
    overflow: hidden;
  }

  .scene {
    position: absolute;
    inset: 0;
    width: 100%;
    height: 100%;
  }

  .mesh {
    fill: none;
    stroke: #686868;
    stroke-width: 1;
  }

  .constraint {
    fill: none;
    stroke: #0c2be0;
    stroke-width: 1.3;
  }

  .triad text {
    font-size: 9px;
  }

  .model-title {
    position: absolute;
    top: 0;
    left: 2px;
    margin: 0;
    white-space: nowrap;
  }

  .counts {
    position: absolute;
    bottom: 130px;
    left: 4px;
    width: 84px;
    border-collapse: collapse;
  }

  .counts caption {
    text-align: left;
  }

  .counts th,
  .counts td {
    padding: 0;
    font-weight: normal;
    text-align: left;
    white-space: nowrap;
  }

  .counts td {
    text-align: right;
  }

  .tabs {
    grid-area: tabs;
    display: flex;
    align-items: center;
    gap: 5px;
    padding-left: 1px;
  }

  .tabs button {
    width: 12px;
    height: 12px;
  }

  .tabs svg {
    display: block;
    fill: #fbe0dc;
    stroke: #dc4637;
  }

  .tabs .bar {
    margin-left: 5px;
    height: 14px;
  }

  /* solver panel */
  .solver {
    grid-area: solver;
    display: flex;
    flex-direction: column;
    padding-left: 5px;
    overflow: hidden;
  }

  .solver h2 {
    box-sizing: border-box;
    height: 16px;
    margin: 0;
    padding: 1px 0 0 1px;
    border: 1px solid #c8c8c8;
    border-right: 0;
    background: #d9d9d9;
    font: inherit;
    line-height: 14px;
    white-space: nowrap;
  }

  .solver-body {
    flex: 1;
    min-height: 0;
    margin: 2px 0 3px 1px;
    padding-left: 4px;
    border-left: 1px solid #fff;
    font: 11px/14px 'Liberation Sans', sans-serif;
  }

  .solver h3 {
    box-sizing: border-box;
    height: 19px;
    margin: 0;
    padding: 4px 0 0 6px;
    color: #000;
    font-size: 11px;
    white-space: nowrap;
  }

  .items {
    display: grid;
    width: 54px;
    grid-auto-rows: 13px;
    gap: 1px;
    padding-bottom: 1px;
  }

  .items button {
    display: flex;
    align-items: center;
    justify-content: center;
    box-sizing: border-box;
    width: 54px;
    min-height: 0;
    border: 1px solid #bbb;
    background: #e1e1e1;
    line-height: 12px;
    white-space: pre;
    overflow: hidden;
  }

  .dense h3 {
    height: 17px;
    padding-top: 3px;
  }

  .dense .items {
    grid-auto-rows: 1fr;
    gap: 1px;
    height: 102px;
    padding: 0;
  }

  .options-box {
    height: 21px;
    margin: 2px 0 0 2px;
    border: 1px solid #999;
    border-right: 0;
    border-bottom: 0;
    background: #fff;
  }

  /* lower toolbar */
  .lower {
    grid-area: lower;
    display: grid;
    grid-template-columns: 127px 298px 299px 109px 60px 1fr;
    align-items: start;
    padding-top: 3px;
    overflow: hidden;
  }

  .lower .group {
    padding-top: 1px;
    align-items: flex-start;
  }

  .lower .tool {
    align-items: flex-start;
    color: #345;
    font-size: 11px;
    font-weight: bold;
    font-family: 'Liberation Sans', sans-serif;
  }

  .lower .tool.on {
    background: #bcdcf4;
  }

  .hint {
    display: flex;
    justify-content: space-between;
    width: 117px;
    height: 20px;
    border: 1px solid #999;
    border-left: 0;
    background: #fff;
    line-height: 2px;
    overflow: hidden;
    white-space: nowrap;
  }

  .hint span {
    width: 104px;
    overflow: hidden;
  }

  .hint i {
    width: 4px;
    height: 4px;
    margin: 6px 4px 0 0;
    border: solid #555;
    border-width: 1px 0 0 1px;
    transform: rotate(45deg);
  }

  .watermark {
    position: absolute;
    right: 36px;
    bottom: 30px;
    display: flex;
    align-items: center;
    gap: 4px;
    color: #fff;
    font: 26px/34px 'Noto Sans', sans-serif;
    text-shadow: 0 0 2px #555;
    pointer-events: none;
  }

  .watermark svg {
    width: 40px;
    height: 34px;
  }
</style>
